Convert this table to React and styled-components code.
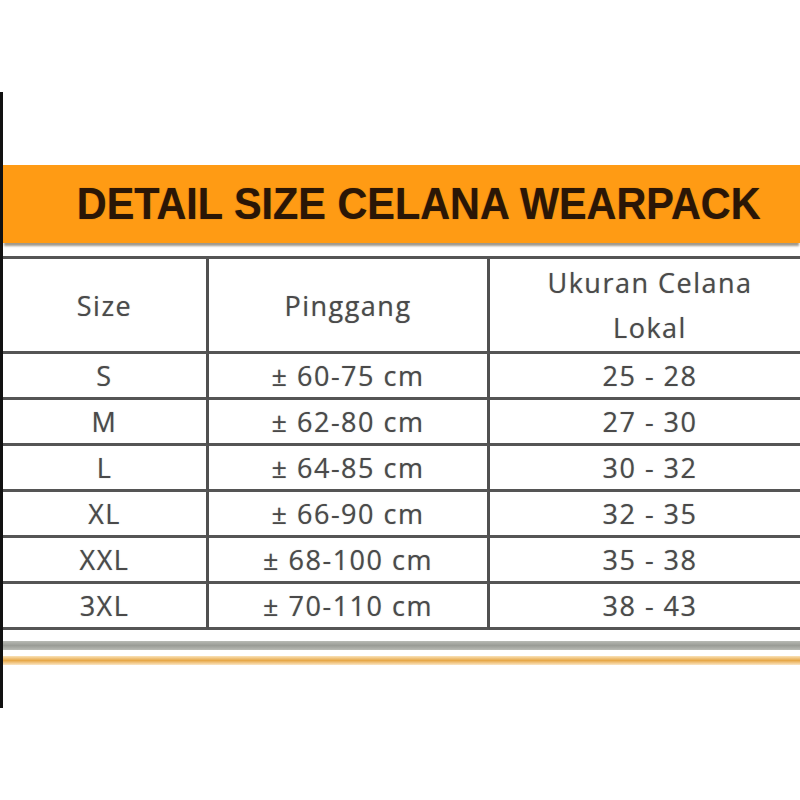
import React from 'react';
import styled, { createGlobalStyle } from 'styled-components';

const GlobalStyle = createGlobalStyle`
    body {
        margin: 0;
        background: #ffffff;
    }
`

const Frame = styled.div`
    margin-top: 92px;
    height: 616px;
    width: 797px;
    border-left: 3px solid #111111;
    overflow: hidden;
    display: flex;
    flex-direction: column;
`

const Banner = styled.div`
    margin-top: 73px;
    height: 78px;
    flex-shrink: 0;
    background: #ff9b14;
    box-shadow: 0 4px 2px -1px rgba(120, 110, 90, 0.7);
    display: flex;
    align-items: center;
    justify-content: center;
    padding-left: 34px;
`

const Title = styled.h1`
    margin: 0;
    font-family: 'Liberation Sans', Arial, sans-serif;
    font-weight: bold;
    font-size: 45px;
    transform: scaleX(0.92);
    color: #2a1606;
    text-shadow: 0 0 1px rgba(60, 30, 10, 0.6);
    white-space: nowrap;
`

const Table = styled.div`
    margin-top: 13px;
    display: grid;
    grid-template-columns: 206px 281px 320px;
    border-top: 3px solid #555555;
    flex-shrink: 0;
`

const Cell = styled.div`
    height: ${props => props.$head ? 92 : 43}px;
    border-bottom: 3px solid #555555;
    border-right: ${props => props.$last ? 'none' : '3px solid #505050'};
    display: flex;
    flex-direction: column;
    align-items: center;
    justify-content: center;
    font-family: 'Open Sans', sans-serif;
    font-size: 27px;
    font-weight: 500;
    letter-spacing: 1.5px;
    line-height: 45px;
    color: #4a4a4a;
    text-shadow: 0 0 1px rgba(70, 70, 70, 0.5);
    white-space: nowrap;
`

const Rule = styled.div`
    margin-top: 11px;
    height: 9px;
    flex-shrink: 0;
    background: linear-gradient(#b8bab4, #9a9c96 50%, #b8bab4);
`

const Stripe = styled.div`
    margin-top: 6px;
    height: 9px;
    flex-shrink: 0;
    background: linear-gradient(#f9e2b8, #e7a848 50%, #fbe6c4);
`

const rows = [
    ['S', '± 60-75 cm', '25 - 28'],
    ['M', '± 62-80 cm', '27 - 30'],
    ['L', '± 64-85 cm', '30 - 32'],
    ['XL', '± 66-90 cm', '32 - 35'],
    ['XXL', '± 68-100 cm', '35 - 38'],
    ['3XL', '± 70-110 cm', '38 - 43'],
]

const App = () => {
    return (
        <>
            <GlobalStyle />
            <Frame>
                <Banner>
                    <Title>DETAIL SIZE CELANA WEARPACK</Title>
                </Banner>
                <Table>
                    <Cell $head>Size</Cell>
                    <Cell $head>Pinggang</Cell>
                    <Cell $head $last>
                        <span>Ukuran Celana</span>
                        <span>Lokal</span>
                    </Cell>
                    {rows.map(row => row.map((value, i) => (
                        <Cell key={row[0] + i} $last={i === 2}>{value}</Cell>
                    )))}
                </Table>
                <Rule />
                <Stripe />
            </Frame>
        </>
    );
}

export default App;
